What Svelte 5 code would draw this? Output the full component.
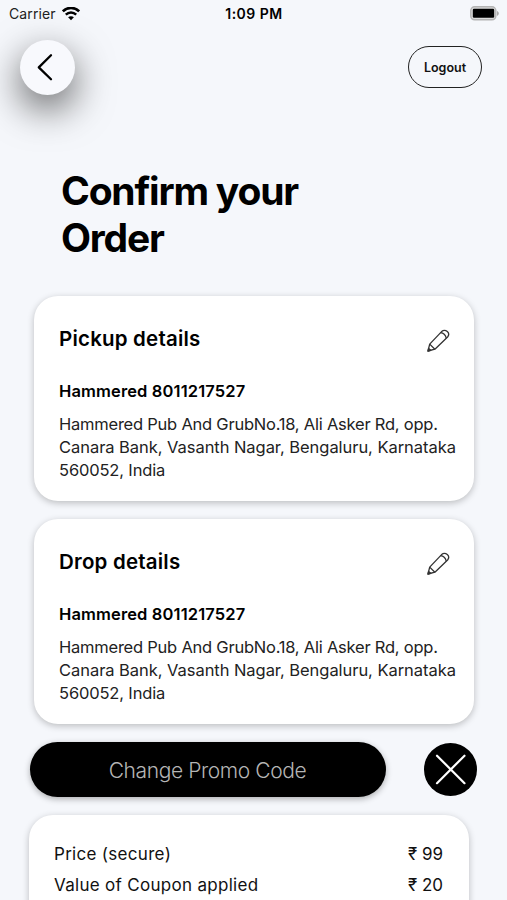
<script>
  const stops = [
    {
      title: 'Pickup details',
      contact: 'Hammered 8011217527',
      address: ['Hammered Pub And GrubNo.18, Ali Asker Rd, opp.', 'Canara Bank, Vasanth Nagar, Bengaluru, Karnataka', '560052, India']
    },
    {
      title: 'Drop details',
      contact: 'Hammered 8011217527',
      address: ['Hammered Pub And GrubNo.18, Ali Asker Rd, opp.', 'Canara Bank, Vasanth Nagar, Bengaluru, Karnataka', '560052, India']
    }
  ];

  const prices = [
    { label: 'Price (secure)', amount: 99 },
    { label: 'Value of Coupon applied', amount: 20 }
  ];
</script>

<div class="screen">
  <div class="status">
    <div class="carrier">
      <span>Carrier</span>
      <svg width="18" height="14" viewBox="0 0 18 14" fill="none" stroke="#000">
        <path d="M.8 4.4C5.4 -.2 12.6 -.2 17.2 4.4" stroke-width="2.7" />
        <path d="M3.8 7.6C6.8 4.7 11.2 4.7 14.2 7.6" stroke-width="2.4" />
        <path d="M9 13.2L6.1 10.2C7.7 8.8 10.3 8.8 11.9 10.2Z" fill="#000" stroke="none" />
      </svg>
    </div>
    <span class="time">1:09 PM</span>
    <svg class="battery" width="29" height="15" viewBox="0 0 29 15">
      <rect x=".8" y=".8" width="25" height="13" rx="3.8" fill="#ddd" stroke="#b4b4b4" stroke-width="1.5" />
      <rect x="2.8" y="2.8" width="21.4" height="9" rx="1.2" />
      <path d="M27 5C29.4 6 29.4 8.8 27 9.8Z" fill="#aaa" />
    </svg>
  </div>

  <header>
    <button class="back" aria-label="Back">
      <svg width="55" height="55" viewBox="0 0 55 55">
        <path d="M31 15.3L18.8 27.4L31 39.3" fill="none" stroke="#000" stroke-width="2.3" stroke-linecap="round" stroke-linejoin="round" />
      </svg>
    </button>
    <button class="logout">Logout</button>
  </header>

  <h1>Confirm your<br />Order</h1>

  <main>
    {#each stops as stop}
      <section class="card">
        <div class="heading">
          <h2>{stop.title}</h2>
          <svg width="24" height="24" viewBox="0 0 24 24" fill="none" stroke="#333" stroke-width="1.3" stroke-linejoin="round">
            <path d="M2 22L3.7 15.1L15.6 2.6Q18.4 .2 21.3 2.6Q24 5 21.6 8L8.9 20.2Z" />
            <path d="M3.7 15.1L8.9 20.2M14.6 3.7Q19 4.2 20.3 9.2" />
            <path d="M2 22L2.6 19.4L4.7 21.3Z" fill="#333" />
          </svg>
        </div>
        <h3>{stop.contact}</h3>
        <p>
          {#each stop.address as line}
            <span>{line}</span>
          {/each}
        </p>
      </section>
    {/each}
  </main>

  <div class="promo">
    <button class="code">Change Promo Code</button>
    <button class="clear" aria-label="Remove promo code">
      <svg width="53" height="53" viewBox="0 0 53 53">
        <path d="M13 12.7L40.5 40.2M40.5 12.7L13 40.2" stroke="#fff" stroke-width="2.2" stroke-linecap="round" />
      </svg>
    </button>
  </div>

  <section class="bill">
    {#each prices as price}
      <div class="row">
        <span class="label">{price.label}</span>
        <span>₹ {price.amount}</span>
      </div>
    {/each}
  </section>
</div>

<style>
  :global(body) {
    background: #f5f7fb;
  }

  .screen {
    height: 900px;
    overflow: hidden;
    box-sizing: border-box;
    font-family: Inter, "Noto Sans", sans-serif;
    color: #000;
    background: #f5f7fb;
  }

  button {
    padding: 0;
    border: 0;
    font-family: inherit;
  }

  svg {
    display: block;
  }

  h1, h2, h3, p {
    margin: 0;
  }

  .status {
    display: grid;
    grid-template-columns: 1fr auto 1fr;
    align-items: center;
    height: 27px;
    padding: 0 8px 0 9px;
    font-size: 14px;
  }

  .carrier {
    display: flex;
    align-items: center;
    gap: 6px;
    color: #222;
    letter-spacing: 0.1px;
  }

  .time {
    font-weight: 600;
    letter-spacing: 0.5px;
  }

  .battery {
    justify-self: end;
  }

  header {
    display: flex;
    justify-content: space-between;
    align-items: center;
    height: 55px;
    margin-top: 13px;
    padding: 0 25px 0 20px;
  }

  .back {
    width: 55px;
    height: 55px;
    border-radius: 50%;
    background: #f8f9fd;
    box-shadow: 0 14px 38px rgba(0, 0, 0, 0.62);
  }

  .logout {
    width: 74px;
    height: 42px;
    margin-bottom: 2px;
    padding-top: 1px;
    border: 1.4px solid #222;
    border-radius: 21px;
    background: transparent;
    font-size: 12.5px;
    font-weight: 600;
    color: #111;
  }

  h1 {
    margin: 72px 0 0 61px;
    font-size: 39px;
    line-height: 47px;
    font-weight: 700;
    letter-spacing: -1.2px;
  }

  main {
    display: flex;
    flex-direction: column;
    gap: 18px;
    margin: 35px 33px 0 34px;
  }

  .card {
    height: 205px;
    box-sizing: border-box;
    padding: 30px 0 0 25px;
    border-radius: 24px;
    background: #fff;
    box-shadow: 0 2px 7px rgba(0, 0, 0, 0.24);
  }

  .heading {
    display: flex;
    justify-content: space-between;
    height: 53px;
    padding-right: 24px;
  }

  .heading svg {
    margin-top: 3px;
  }

  h2 {
    font-size: 20.5px;
    line-height: 26px;
    font-weight: 600;
    letter-spacing: 0.2px;
  }

  h3 {
    font-size: 16.5px;
    line-height: 24px;
    font-weight: 600;
    letter-spacing: 0.13px;
  }

  p {
    margin-top: 9.5px;
    font-size: 16.5px;
    line-height: 23.3px;
    font-weight: 400;
    letter-spacing: -0.15px;
    color: #222;
  }

  p span {
    display: block;
    white-space: nowrap;
  }

  p span:nth-child(1) {
    letter-spacing: -0.23px;
  }

  p span:nth-child(2) {
    letter-spacing: -0.05px;
  }

  .promo {
    display: flex;
    justify-content: space-between;
    align-items: center;
    margin: 18px 30px 0;
    height: 55px;
  }

  .code {
    width: 356px;
    height: 55px;
    padding: 2px 1px 0 0;
    border-radius: 28px;
    background: #000;
    color: #b5b5b5;
    font-size: 21px;
    font-weight: 300;
    letter-spacing: -0.4px;
    box-shadow: 0 2px 6px rgba(0, 0, 0, 0.3);
  }

  .clear {
    width: 53px;
    height: 53px;
    border-radius: 50%;
    background: #000;
  }

  .bill {
    height: 130px;
    box-sizing: border-box;
    margin: 18px 38px 0 29px;
    padding: 24px 26px 0 25px;
    border-radius: 24px;
    background: #fff;
    box-shadow: 0 2px 7px rgba(0, 0, 0, 0.24);
  }

  .row {
    display: flex;
    justify-content: space-between;
    font-size: 17px;
    line-height: 31px;
    color: #111;
  }

  .label {
    letter-spacing: 0.3px;
  }
</style>
